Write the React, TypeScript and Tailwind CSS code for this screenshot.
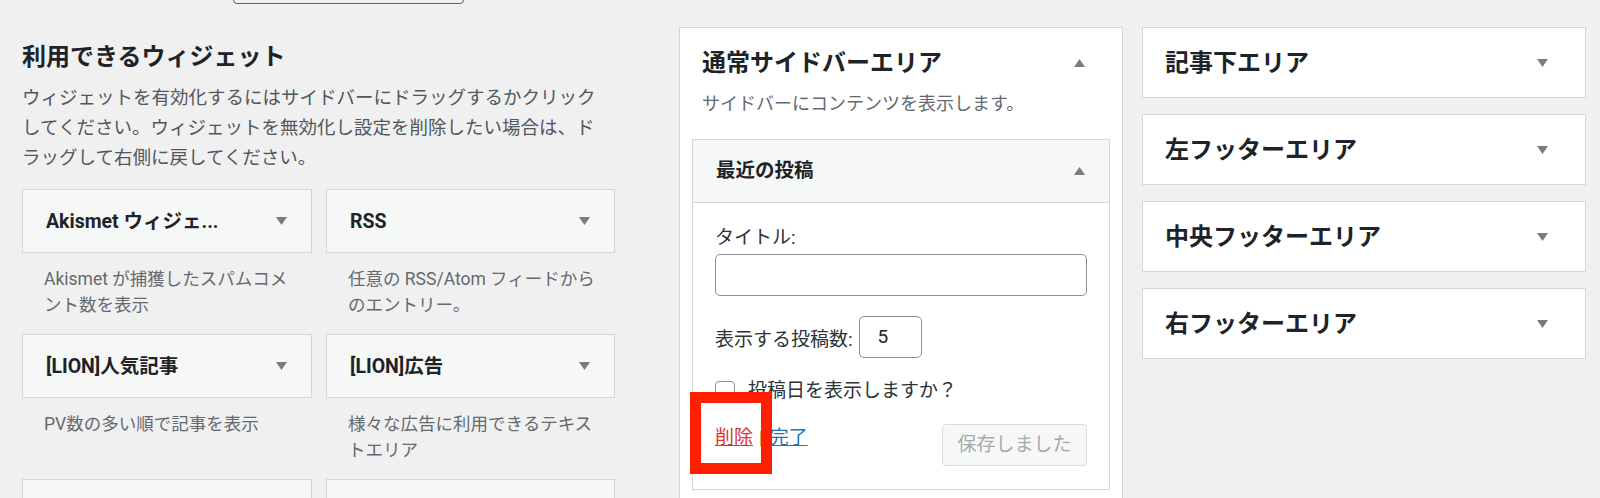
const font = { fontFamily: 'Roboto, "Noto Sans CJK JP", sans-serif' }

function Caret({ up = false }: { up?: boolean }) {
  return (
    <svg width="11" height="8" viewBox="0 0 11 8" className="shrink-0">
      <path d={up ? "M0 8H11L5.5 0Z" : "M0 0H11L5.5 8Z"} fill="#787c82" />
    </svg>
  )
}

const widgets = [
  { title: "Akismet ウィジェ...", desc: ["Akismet が捕獲したスパムコメ", "ント数を表示"] },
  { title: "RSS", desc: ["任意の RSS/Atom フィードから", "のエントリー。"] },
  { title: "[LION]人気記事", desc: ["PV数の多い順で記事を表示"] },
  { title: "[LION]広告", desc: ["様々な広告に利用できるテキス", "トエリア"] },
  { title: "", desc: [] },
  { title: "", desc: [] },
]

const areas = ["記事下エリア", "左フッターエリア", "中央フッターエリア", "右フッターエリア"]

export default function App() {
  return (
    <div className="flex h-[498px] w-[1600px] overflow-hidden bg-[#f0f0f1]" style={font}>
      {/* available widgets */}
      <div className="ml-[22px] w-[593px] shrink-0">
        <div className="ml-[211px] -mt-[36px] h-[40px] w-[231px] rounded-[4px] border border-[#2271b1]" />
        <h2 className="mt-[37px] text-[24px] font-bold leading-[32px] text-[#1d2327]">利用できるウィジェット</h2>
        <p className="mt-[10px] text-[18.5px] leading-[30px] text-[#50575e]">
          ウィジェットを有効化するにはサイドバーにドラッグするかクリック
          <br />
          してください。ウィジェットを無効化し設定を削除したい場合は、ド
          <br />
          ラッグして右側に戻してください。
        </p>
        <div className="mt-[16px] grid grid-cols-[290px_289px] gap-x-[14px]">
          {widgets.map((w, i) => (
            <div key={i}>
              <div className="flex h-[64px] items-center justify-between border border-[#d5d6d8] bg-[#f6f7f7] pl-[23px] pr-[24px]">
                <span className="mt-[2px] text-[19.5px] font-bold leading-none text-[#1d2327]">{w.title}</span>
                {w.title && <Caret />}
              </div>
              <div className="pb-[16px] pl-[22px] pt-[13px] text-[17.5px] leading-[26px] text-[#646970]">
                {w.desc.map((l, j) => (
                  <div key={j} className="whitespace-nowrap">
                    {l}
                  </div>
                ))}
              </div>
            </div>
          ))}
        </div>
      </div>

      {/* main sidebar */}
      <div className="ml-[64px] w-[444px] shrink-0 pt-[27px]">
        <div className="border border-[#d5d6d8] bg-white px-[12px] pb-[13px]">
          <div className="flex items-center justify-between pl-[10px] pr-[25px] pt-[19px]">
            <h2 className="text-[24px] font-bold leading-[32px] text-[#1d2327]">通常サイドバーエリア</h2>
            <Caret up />
          </div>
          <p className="mt-[12px] pl-[10px] text-[18px] leading-[26px] text-[#646970]">サイドバーにコンテンツを表示します。</p>
          <div className="mt-[22px] border border-[#d5d6d8]">
            <div className="flex h-[63px] items-center justify-between border-b border-[#d5d6d8] bg-[#f6f7f7] pl-[23px] pr-[24px]">
              <h3 className="text-[19.5px] font-bold leading-none text-[#1d2327]">最近の投稿</h3>
              <Caret up />
            </div>
            <div className="px-[22px] pb-[23px] pt-[22px] text-[19px] text-[#2c3338]">
              <div className="leading-[26px]">タイトル:</div>
              <div className="mt-[3px] h-[42px] w-full rounded-[5px] border border-[#8c8f94] bg-white" />
              <div className="mt-[20px] flex items-center">
                <span className="mt-[5px] leading-[26px]">表示する投稿数:</span>
                <div className="ml-[6px] flex h-[42px] w-[63px] items-center rounded-[5px] border border-[#8c8f94] pl-[18px] text-[#1d2327]">
                  5
                </div>
              </div>
              <div className="mt-[20px] flex h-[26px] items-center">
                <div className="h-[20px] w-[20px] rounded-[4px] border border-[#8c8f94] bg-white" />
                <span className="ml-[13px] leading-[26px]">投稿日を表示しますか？</span>
              </div>
              <div className="relative mt-[20px] flex items-start justify-between">
                <div className="mt-[1px] flex items-center gap-[6px] leading-[26px]">
                  <span className="text-[#d63638] underline">削除</span>
                  <span className="text-[#1d2327]">|</span>
                  <span className="text-[#2271b1] underline">完了</span>
                </div>
                <div className="flex h-[42px] w-[145px] items-center justify-center rounded-[4px] border border-[#dcdcde] bg-[#f6f7f7] text-[#a7aaad]">
                  保存しました
                </div>
                <div className="absolute -left-[25px] -top-[32px] h-[82px] w-[82px] border-[11px] border-[#ff1e00]" />
              </div>
            </div>
          </div>
        </div>
      </div>

      {/* other areas */}
      <div className="ml-[19px] w-[444px] shrink-0 pt-[27px]">
        {areas.map((a) => (
          <div
            key={a}
            className="mb-[16px] flex h-[71px] items-center justify-between border border-[#d5d6d8] bg-white pl-[22px] pr-[37px]"
          >
            <h2 className="text-[24px] font-bold leading-none text-[#1d2327]">{a}</h2>
            <Caret />
          </div>
        ))}
      </div>
    </div>
  )
}
